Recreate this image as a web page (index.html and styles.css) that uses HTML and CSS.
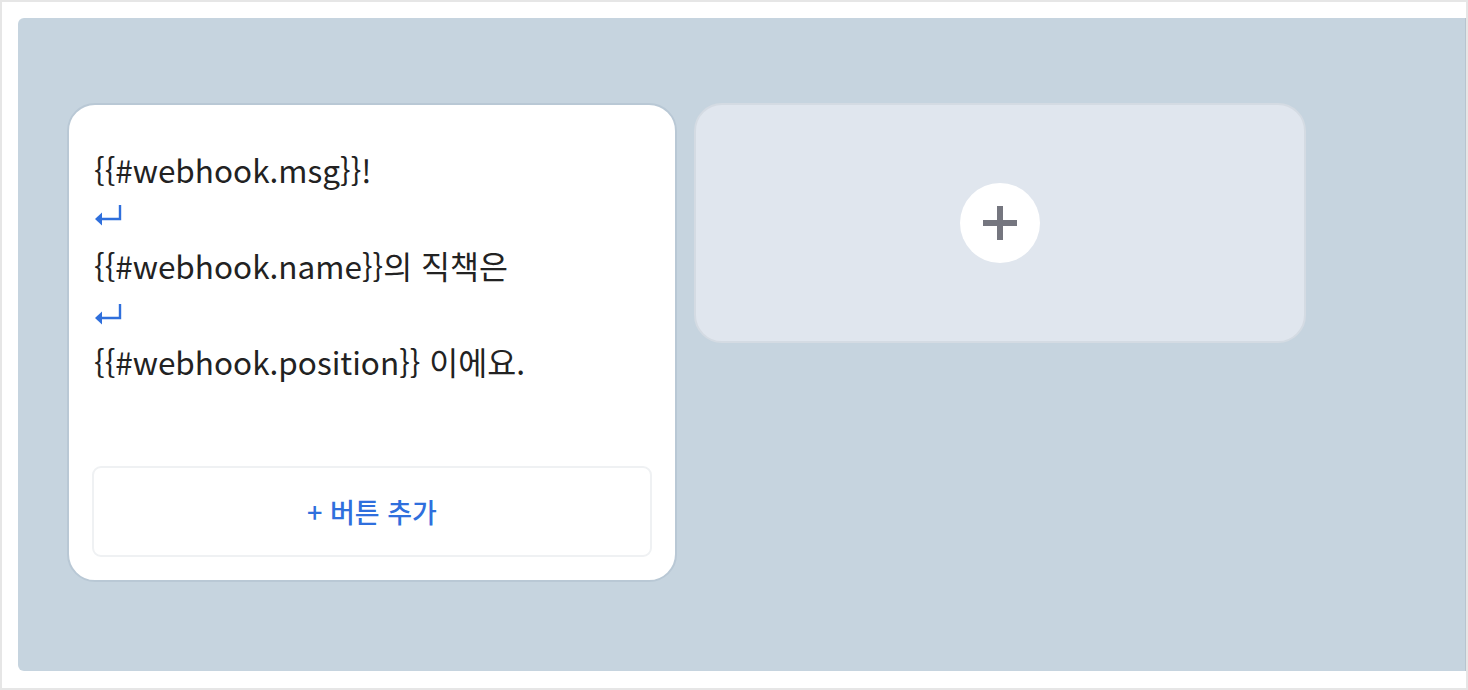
FILE: index.html
```html
<!DOCTYPE html>
<html lang="ko">
<head>
<meta charset="utf-8">
<link rel="stylesheet" href="styles.css">
</head>
<body>
<div class="frame">
  <div class="canvas">
    <div class="card">
      <div class="message">
        <div class="line">{{#webhook.msg}}!</div>
        <div class="line br"><svg width="28" height="24" viewBox="0 0 28 24"><path d="M26 1 V15 H7" fill="none" stroke="#2f6fdc" stroke-width="2.4"/><path d="M1 15 L8 8.5 V21.5 Z" fill="#2f6fdc"/></svg></div>
        <div class="line">{{#webhook.name}}의 직책은</div>
        <div class="line br second"><svg width="28" height="24" viewBox="0 0 28 24"><path d="M26 1 V15 H7" fill="none" stroke="#2f6fdc" stroke-width="2.4"/><path d="M1 15 L8 8.5 V21.5 Z" fill="#2f6fdc"/></svg></div>
        <div class="line">{{#webhook.position}} 이에요.</div>
      </div>
      <div class="add-btn">+ 버튼 추가</div>
    </div>
    <div class="card empty">
      <div class="plus-circle">
        <svg width="36" height="36" viewBox="0 0 36 36"><path d="M15 1 H21 V15 H35 V21 H21 V35 H15 V21 H1 V15 H15 Z" fill="#75767f"/></svg>
      </div>
    </div>
  </div>
</div>
</body>
</html>
```
FILE: styles.css
```css
html, body {
  margin: 0;
  padding: 0;
  background: #ffffff;
}
body {
  font-family: "Noto Sans CJK KR", "Noto Sans", sans-serif;
}
.frame {
  box-sizing: border-box;
  width: 1468px;
  height: 690px;
  border: 2px solid #e6e6e6;
  padding: 16px 0 17px 16px;
}
.canvas {
  box-sizing: border-box;
  height: 653px;
  background: #c6d4df;
  border-radius: 6px 0 0 6px;
  border-right: 1px solid #b7c4cf;
  padding: 85px 0 0 49px;
  display: flex;
  align-items: flex-start;
  gap: 17px;
}
.card {
  box-sizing: border-box;
  width: 610px;
  height: 479px;
  background: #ffffff;
  border: 2px solid #b9c8d5;
  border-radius: 28px;
  padding: 30px 23px 23px 23px;
  display: flex;
  flex-direction: column;
}
.message {
  flex: 1;
  padding-left: 2px;
  padding-top: 10px;
}
.line {
  font-size: 31.5px;
  line-height: 48px;
  color: #222222;
  height: 48px;
  white-space: nowrap;
}
.line.br {
  display: flex;
  align-items: flex-start;
}
.line.br svg {
  display: block;
  margin-top: 11px;
}
.line.br.second svg {
  margin-top: 14px;
}
.add-btn {
  box-sizing: border-box;
  height: 91px;
  border: 2px solid #eff1f3;
  border-radius: 9px;
  display: flex;
  align-items: center;
  justify-content: center;
  color: #2f6fdd;
  font-size: 27px;
  font-weight: 500;
}
.card.empty {
  width: 612px;
  height: 240px;
  background: #e0e6ee;
  border-color: #d4dbe3;
  justify-content: center;
  align-items: center;
  padding: 0;
}
.plus-circle {
  width: 80px;
  height: 80px;
  border-radius: 50%;
  background: #ffffff;
  display: flex;
  align-items: center;
  justify-content: center;
}
.plus-circle svg {
  display: block;
}
```
